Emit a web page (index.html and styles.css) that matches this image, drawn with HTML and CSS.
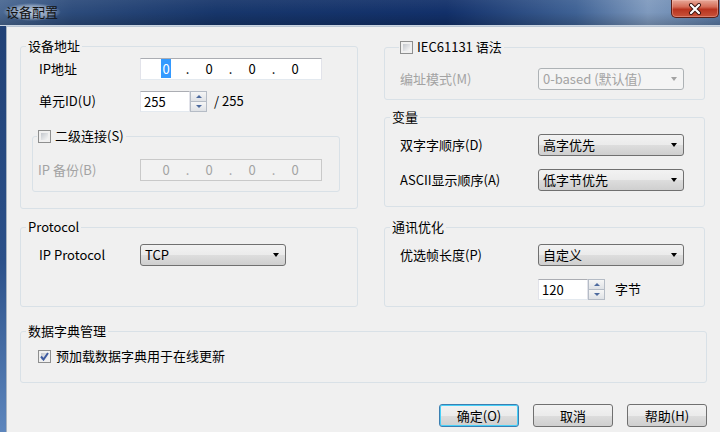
FILE: index.html
```html
<!DOCTYPE html>
<html lang="zh-CN">
<head>
    <meta charset="UTF-8">
    <title>设备配置</title>
    <link rel="stylesheet" href="styles.css">
</head>
<body>
    <div class="window">
        <div class="titlebar">
            <span class="title">设备配置</span>
            <button class="close-button" aria-label="关闭">
                <svg width="20" height="12" viewBox="0 0 20 12">
                    <path d="M6 2 L14 10 M14 2 L6 10" stroke="#3a1410" stroke-width="4" stroke-linecap="round"/>
                    <path d="M6 2 L14 10 M14 2 L6 10" stroke="#ffffff" stroke-width="2.2" stroke-linecap="round"/>
                </svg>
            </button>
        </div>

        <div class="client">
            <div class="top-section">
                <div class="col-left">
                    <fieldset class="group group-address">
                        <legend>设备地址</legend>
                        <div class="field-row row-ip">
                            <span class="field-label">IP地址</span>
                            <div class="ip-box">
                                <span class="octet"><span class="selected">0</span></span><span class="dot">.</span>
                                <span class="octet">0</span><span class="dot">.</span>
                                <span class="octet">0</span><span class="dot">.</span>
                                <span class="octet">0</span>
                            </div>
                        </div>
                        <div class="field-row row-unit">
                            <span class="field-label">单元ID(U)</span>
                            <div class="spinner">
                                <span class="spin-value">255</span>
                                <span class="spin-buttons">
                                    <span class="spin-up"></span>
                                    <span class="spin-down"></span>
                                </span>
                            </div>
                            <span class="spin-max">/ 255</span>
                        </div>

                        <fieldset class="group group-secondary">
                            <legend class="check-legend"><span class="check"></span>二级连接(S)</legend>
                            <div class="field-row row-backup">
                                <span class="field-label disabled">IP 备份(B)</span>
                                <div class="ip-box ip-disabled">
                                    <span class="octet">0</span><span class="dot">.</span>
                                    <span class="octet">0</span><span class="dot">.</span>
                                    <span class="octet">0</span><span class="dot">.</span>
                                    <span class="octet">0</span>
                                </div>
                            </div>
                        </fieldset>
                    </fieldset>
                </div>

                <div class="col-right">
                    <fieldset class="group group-iec">
                        <legend class="check-legend iec-legend"><span class="check"></span>IEC61131 语法</legend>
                        <div class="field-row row-mode">
                            <span class="field-label wide disabled">编址模式(M)</span>
                            <div class="combo combo-disabled">
                                <span>0-based (默认值)</span>
                                <span class="arrow"></span>
                            </div>
                        </div>
                    </fieldset>

                    <fieldset class="group group-vars">
                        <legend>变量</legend>
                        <div class="field-row row-first">
                            <span class="field-label wide">双字字顺序(D)</span>
                            <div class="combo">
                                <span>高字优先</span>
                                <span class="arrow"></span>
                            </div>
                        </div>
                        <div class="field-row row-next">
                            <span class="field-label wide">ASCII显示顺序(A)</span>
                            <div class="combo">
                                <span>低字节优先</span>
                                <span class="arrow"></span>
                            </div>
                        </div>
                    </fieldset>
                </div>
            </div>

            <div class="mid-section">
                <fieldset class="group group-protocol">
                    <legend>Protocol</legend>
                    <div class="field-row row-protocol">
                        <span class="field-label">IP Protocol</span>
                        <div class="combo">
                            <span>TCP</span>
                            <span class="arrow"></span>
                        </div>
                    </div>
                </fieldset>

                <fieldset class="group group-comm">
                    <legend>通讯优化</legend>
                    <div class="field-row row-first">
                        <span class="field-label wide">优选帧长度(P)</span>
                        <div class="combo">
                            <span>自定义</span>
                            <span class="arrow"></span>
                        </div>
                    </div>
                    <div class="field-row row-frame">
                        <div class="spinner">
                            <span class="spin-value">120</span>
                            <span class="spin-buttons">
                                <span class="spin-up"></span>
                                <span class="spin-down"></span>
                            </span>
                        </div>
                        <span class="unit">字节</span>
                    </div>
                </fieldset>
            </div>

            <fieldset class="group group-dict">
                <legend>数据字典管理</legend>
                <div class="check-row">
                    <span class="check checked">
                        <svg width="9" height="9" viewBox="0 0 9 9">
                            <path d="M1 4.5 L3.5 7.5 L8 1" fill="none" stroke="#3d5aa0" stroke-width="2"/>
                        </svg>
                    </span>
                    <span>预加载数据字典用于在线更新</span>
                </div>
            </fieldset>

            <div class="button-row">
                <button class="dlg-button default">确定(O)</button>
                <button class="dlg-button">取消</button>
                <button class="dlg-button">帮助(H)</button>
            </div>
        </div>
    </div>
</body>
</html>
```

FILE: styles.css
```css
body {
    margin: 0;
    padding: 0;
    font-family: "Noto Sans CJK SC", "Liberation Sans", sans-serif;
    font-size: 13px;
    line-height: 16px;
    color: #000;
    overflow: hidden;
}

/* Window frame */
.window {
    width: 720px;
    height: 432px;
    background: linear-gradient(180deg, #1f3f74 0%, #2b5089 60%, #5d86bd 100%);
    overflow: hidden;
}

.titlebar {
    height: 25px;
    display: flex;
    justify-content: space-between;
    align-items: flex-start;
    background:
        linear-gradient(180deg, rgba(255, 255, 255, 0.06) 0%, rgba(0, 0, 0, 0) 50%, rgba(0, 0, 0, 0.18) 100%),
        linear-gradient(90deg, #4a6892 0%, #2c4b7b 10%, #17366b 30%, #12306a 62%, #3f6295 80%, #7f9abe 90%, #5b7ba6 100%);
    border-bottom: 1px solid #c9d4e1;
}

.title {
    margin: 3px 0 0 3px;
    padding: 1px 3px;
    line-height: 16px;
    font-size: 13px;
    color: #111;
    border-radius: 8px;
    background: radial-gradient(closest-side, rgba(215, 226, 240, 0.85), rgba(215, 226, 240, 0.45) 70%, rgba(215, 226, 240, 0));
}

.close-button {
    width: 48px;
    height: 18px;
    margin-right: 1px;
    padding: 0;
    display: flex;
    align-items: center;
    justify-content: center;
    border: 1px solid #5b1d14;
    border-top: none;
    border-radius: 0 0 5px 5px;
    background: linear-gradient(180deg, #e7a898 0%, #d56d58 40%, #b9341f 55%, #c9533b 100%);
    box-shadow: inset 0 0 0 1px rgba(255, 210, 200, 0.35);
}

/* Dialog client area */
.client {
    box-sizing: border-box;
    height: 406px;
    margin-left: 6px;
    padding: 11px 0 0 13px;
    background-color: #f0f0f0;
    border-left: 1px solid #a7b3c1;
    border-top: 1px solid #b9c5d3;
}

.top-section {
    display: flex;
    align-items: flex-start;
    gap: 26px;
}

.col-left {
    width: 338px;
}

.col-right {
    width: 321px;
    margin-top: 1px;
}

.mid-section {
    display: flex;
    align-items: flex-start;
    gap: 26px;
    margin-top: 10px;
}

/* Group boxes */
.group {
    box-sizing: border-box;
    margin: 0;
    padding: 0;
    min-width: 0;
    border: 1px solid #d9e1e7;
    border-radius: 3px;
}

.group legend {
    margin-left: 5px;
    padding: 0 2px;
    line-height: 16px;
}

.check-legend {
    display: flex;
    align-items: center;
    gap: 4px;
}

.group .check-legend {
    margin-left: 4px;
    padding: 0 2px 0 1px;
}

.group .iec-legend {
    margin-left: 14px;
}

.group-address {
    width: 338px;
    height: 171px;
}

.group-secondary {
    width: 308px;
    height: 64px;
    margin: 16px 0 0 11px;
}

.group-iec {
    width: 321px;
    height: 61px;
}

.group-vars {
    width: 321px;
    height: 98px;
    margin-top: 9px;
}

.group-protocol {
    width: 338px;
    height: 88px;
}

.group-comm {
    width: 321px;
    height: 88px;
}

.group-dict {
    width: 687px;
    height: 60px;
    margin-top: 16px;
}

/* Rows and labels */
.field-row {
    display: flex;
    align-items: center;
    height: 22px;
}

.field-label {
    width: 101px;
    flex-shrink: 0;
}

.field-label.wide {
    width: 138px;
}

.disabled {
    color: #a3a3a3;
}

.row-ip {
    margin-top: 4px;
    padding-left: 18px;
}

.row-unit {
    margin-top: 10px;
    padding-left: 18px;
}

.row-backup {
    margin-top: 15px;
    padding-left: 5px;
}

.row-backup .field-label {
    width: 102px;
}

.row-mode {
    margin-top: 13px;
    padding-left: 15px;
}

.row-first {
    margin-top: 9px;
    padding-left: 15px;
}

.row-next {
    margin-top: 13px;
    padding-left: 15px;
}

.row-protocol {
    margin-top: 9px;
    padding-left: 18px;
}

.row-frame {
    margin-top: 12px;
    padding-left: 153px;
}

.unit {
    margin-left: 10px;
}

/* IP address control */
.ip-box {
    box-sizing: border-box;
    display: flex;
    align-items: center;
    width: 182px;
    height: 22px;
    padding-left: 7px;
    background-color: #fff;
    border: 1px solid;
    border-color: #abadb3 #e2e3ea #e3e9ef #e2e3ea;
}

.octet {
    width: 36px;
    text-align: center;
}

.dot {
    width: 7px;
    text-align: center;
}

.selected {
    background-color: #3399ff;
    color: #fff;
    padding: 0 1px;
}

.ip-disabled {
    background-color: #f2f2f2;
    border-color: #c9c9c9;
    color: #a3a3a3;
}

/* Spinner */
.spinner {
    display: flex;
    height: 21px;
}

.spin-value {
    box-sizing: border-box;
    width: 50px;
    height: 21px;
    padding-left: 3px;
    line-height: 19px;
    background-color: #fff;
    border: 1px solid;
    border-color: #abadb3 #e2e3ea #e3e9ef #e2e3ea;
}

.spin-buttons {
    display: flex;
    flex-direction: column;
    width: 17px;
    height: 21px;
}

.spin-up,
.spin-down {
    box-sizing: border-box;
    flex: 1;
    display: flex;
    align-items: center;
    justify-content: center;
    border: 1px solid #b5bcc6;
    background: linear-gradient(180deg, #f6f6f6, #dfe2e6);
}

.spin-down {
    border-top: none;
}

.spin-up::after {
    content: "";
    border-left: 3px solid transparent;
    border-right: 3px solid transparent;
    border-bottom: 3px solid #4d6a9e;
}

.spin-down::after {
    content: "";
    border-left: 3px solid transparent;
    border-right: 3px solid transparent;
    border-top: 3px solid #4d6a9e;
}

.spin-max {
    margin-left: 7px;
}

/* Combo boxes */
.combo {
    box-sizing: border-box;
    display: flex;
    align-items: center;
    justify-content: space-between;
    width: 146px;
    height: 22px;
    padding: 0 6px 0 4px;
    border: 1px solid #707070;
    border-radius: 3px;
    background: linear-gradient(180deg, #f2f2f2 0%, #ebebeb 50%, #dddddd 51%, #cfcfcf 100%);
}

.arrow {
    border-left: 3.5px solid transparent;
    border-right: 3.5px solid transparent;
    border-top: 4px solid #000;
}

.combo-disabled {
    border-color: #adb2b5;
    background: #f4f4f4;
    color: #a3a3a3;
}

.combo-disabled .arrow {
    border-top-color: #a3a3a3;
}

/* Checkboxes */
.check {
    display: inline-flex;
    align-items: center;
    justify-content: center;
    width: 7px;
    height: 7px;
    padding: 2px;
    border: 1px solid #8e8f8f;
    background: linear-gradient(135deg, #c3c7cd, #f7f7f7) content-box #f4f4f4;
}

.check svg {
    flex-shrink: 0;
}

.check-row {
    display: flex;
    align-items: center;
    gap: 5px;
    height: 16px;
    margin-top: 9px;
    padding-left: 17px;
}

/* Buttons */
.button-row {
    display: flex;
    justify-content: flex-end;
    gap: 14px;
    width: 687px;
    margin-top: 21px;
}

.dlg-button {
    width: 80px;
    height: 23px;
    padding: 0;
    font-family: inherit;
    font-size: 13px;
    color: #000;
    border: 1px solid #707070;
    border-radius: 3px;
    background: linear-gradient(180deg, #f2f2f2 0%, #ebebeb 50%, #dddddd 51%, #cfcfcf 100%);
}

.dlg-button.default {
    border-color: #3c7fb1;
    box-shadow: inset 0 0 0 1px #48d0f8;
}
```
